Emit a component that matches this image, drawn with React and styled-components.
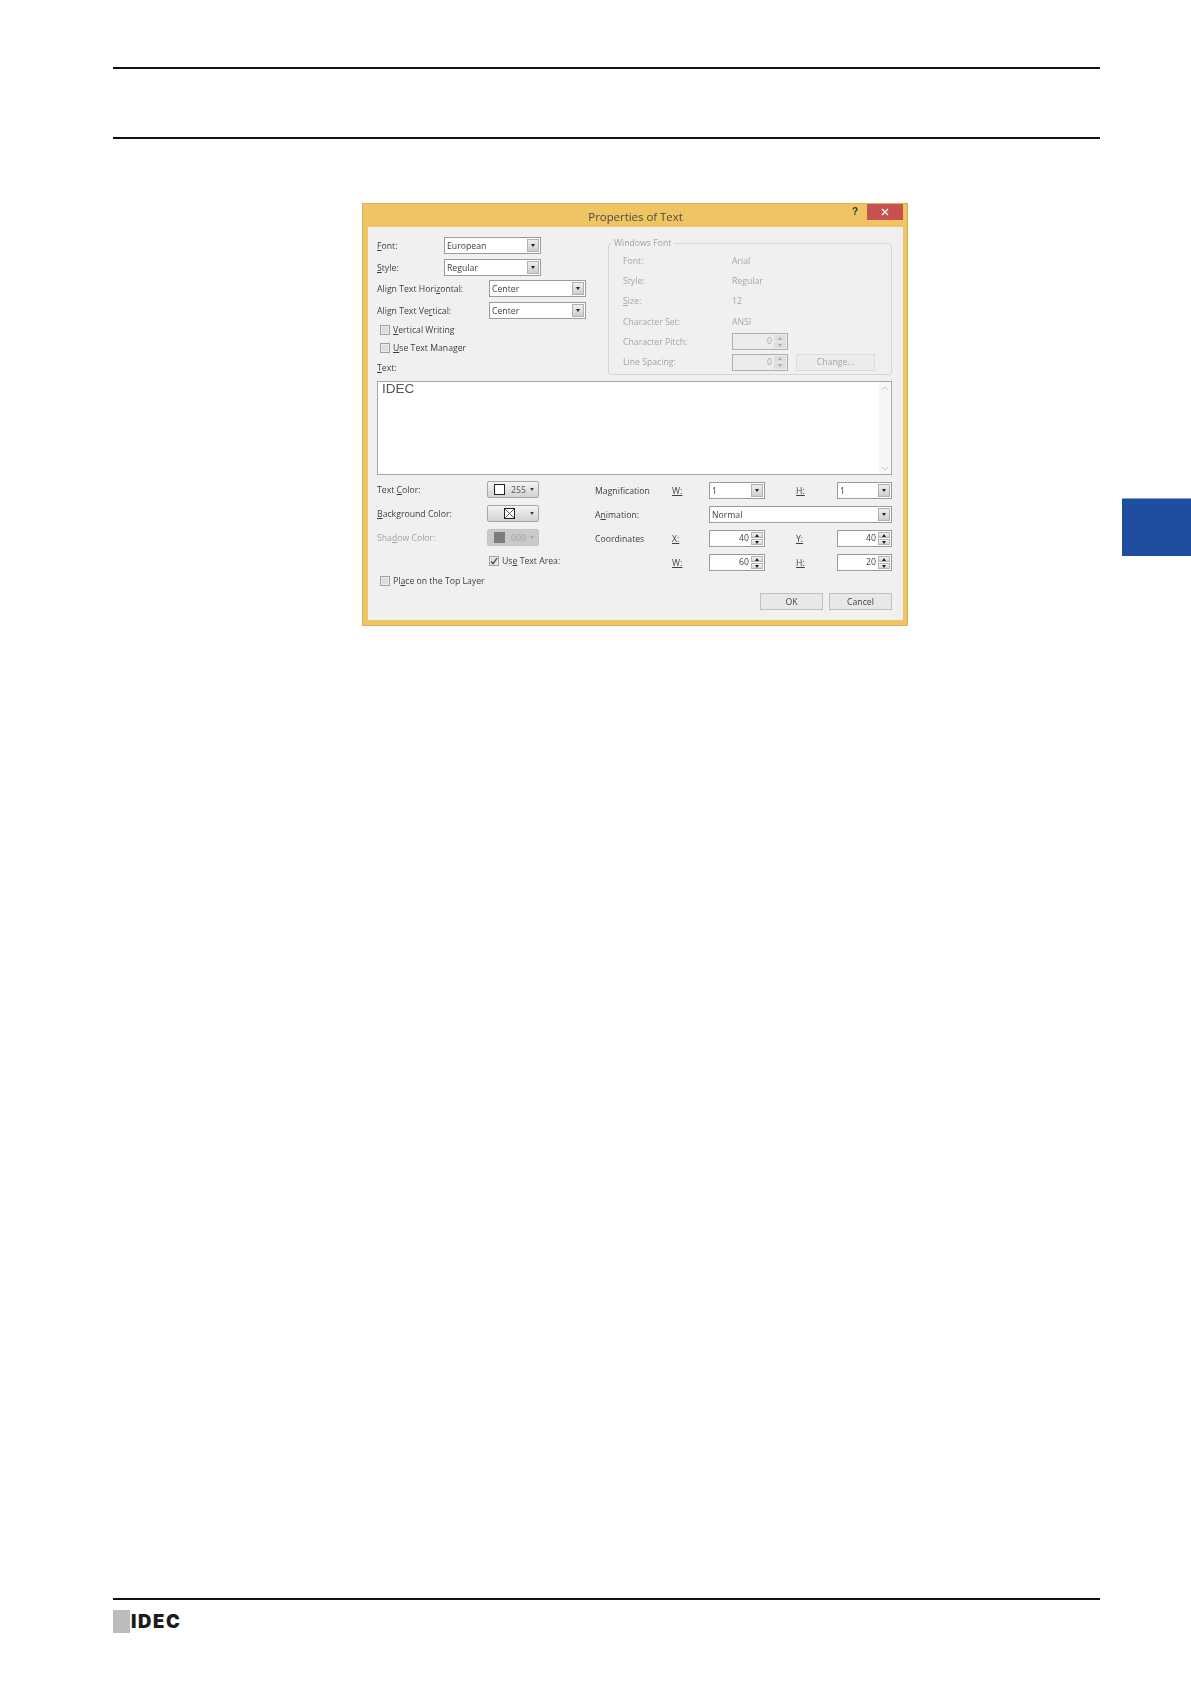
import React from "react";
import styled, { createGlobalStyle } from "styled-components";

const Global = createGlobalStyle`
  html, body { margin: 0; padding: 0; background: #fff; }
  body { font-family: "Open Sans", "Noto Sans", "Liberation Sans", sans-serif; }
  u { text-underline-offset: 1px; text-decoration-thickness: 1px; }
`;

const Page = styled.div`
  width: 1191px; height: 1684px; box-sizing: border-box;
  padding-top: 67px; display: flex; flex-direction: column; overflow: hidden;
`;
const Rule = styled.div`
  width: 987px; height: 2px; margin: ${p => p.$top || 0}px 0 0 113px; background: #111;
`;
const Middle = styled.div`
  display: flex; margin-top: 64px; padding-left: 362px; align-items: flex-start;
`;
const SideTab = styled.div`
  width: 69px; height: 58px; margin-left: auto; margin-top: 295px;
  background: #1f4ea1; border-top: 1px solid #7fa2d8; box-sizing: border-box;
`;
const Footer = styled.div`
  margin-top: auto; padding-bottom: 51px;
`;
const LogoWrap = styled.div`
  display: flex; align-items: center; height: 23px; margin: 10px 0 0 113px;
`;
const LogoBlock = styled.div`
  width: 17px; height: 23px; background: #bcbcbc;
`;
const LogoText = styled.span`
  font: 900 18.5px/23px Inter, "Liberation Sans", sans-serif; color: #1c1c1c; letter-spacing: 1.6px;
  padding-left: 1px;
`;

const Dialog = styled.div`
  width: 546px; height: 423px; box-sizing: border-box; flex: none;
  background: #efc463; border: 1px solid #d8b05a; padding: 0 4px 5px 5px;
  display: flex; flex-direction: column; filter: blur(0.35px);
  font-size: 8.7px; color: #3e3e3e; line-height: 12px;
`;
const TitleBar = styled.div`
  height: 23px; flex: none; display: grid; grid-template-columns: 1fr auto 1fr; align-items: center;
`;
const Title = styled.div`
  font-size: 11.4px; line-height: 23px; color: #4c4a44; padding-top: 1px;
`;
const Controls = styled.div`
  display: flex; align-self: start; justify-content: flex-end; align-items: flex-start;
`;
const Help = styled.span`
  font: 700 10px/16px "Liberation Sans", sans-serif; color: #333; margin-right: 9px;
`;
const Close = styled.div`
  width: 36px; height: 16px; background: #c75050; color: #fff;
  display: flex; align-items: center; justify-content: center;
`;
const Client = styled.div`
  flex: 1; background: #f0f0f0; padding: 10px 11px 10px 9px; display: flex; flex-direction: column; min-height: 0;
`;
const TopSection = styled.div`display: flex; flex: none; height: 138px;`;
const LeftCol = styled.div`width: 231px; flex: none; display: flex; flex-direction: column;`;
const FieldRow = styled.div`
  display: flex; align-items: center; height: ${p => p.$h || 17}px; margin-top: ${p => p.$mt || 0}px;
  padding-left: ${p => p.$indent || 0}px;
`;
const FieldLabel = styled.span`
  width: ${p => p.$w}px; flex: none; white-space: nowrap; color: ${p => p.$off ? "#a4a4a4" : "inherit"};
`;
const ComboBox = styled.div`
  width: ${p => p.$w ? p.$w + "px" : "auto"}; height: 17px; box-sizing: border-box; background: #fff;
  border: 1px solid #9b9b9b; display: flex; align-items: center; justify-content: space-between;
  padding: 1px 1px 1px 2px;
`;
const ArrowBtn = styled.div`
  width: 12px; align-self: stretch; background: linear-gradient(#eeeeee, #cdcdcd);
  border: 1px solid #b0b0b0; box-sizing: border-box; display: flex; align-items: center; justify-content: center;
`;
const Tri = styled.span`
  width: 0; height: 0; border-left: 2.5px solid transparent; border-right: 2.5px solid transparent;
  border-${p => p.$up ? "bottom" : "top"}: 3px solid ${p => p.$c || "#222"};
`;
const CheckBox = styled.div`
  width: 10px; height: 10px; box-sizing: border-box; flex: none; margin-right: 3px;
  border: 1px solid #a0a0a0; background: #dcdcdc; box-shadow: inset 0 0 0 1px #ececec;
  display: flex; align-items: center; justify-content: center;
`;
const Group = styled.div`
  width: 284px; height: 132px; margin-top: 6px; box-sizing: border-box; position: relative; flex: none;
  border: 1px solid #d6d6d6; border-radius: 3px; padding: 7px 14px 0; color: #a6a6a6;
`;
const Legend = styled.span`
  position: absolute; left: 3px; top: -7px; padding: 0 3px 0 2px; background: #f0f0f0; color: #a0a0a0;
`;
const GroupGrid = styled.div`
  display: grid; grid-template-columns: 109px 1fr; grid-auto-rows: 20.2px; align-items: center;
`;
const ValueCell = styled.div`display: flex; align-items: center;`;
const SpinBox = styled.div`
  width: ${p => p.$w}px; height: 17px; box-sizing: border-box; flex: none;
  background: ${p => p.$off ? "#ececec" : "#fff"}; border: 1px solid ${p => p.$off ? "#aeaeae" : "#9b9b9b"};
  display: flex; align-items: stretch; justify-content: flex-end; padding: 1px;
`;
const SpinValue = styled.span`
  line-height: 13px; margin-right: 2px; color: ${p => p.$off ? "#a8a8a8" : "inherit"};
`;
const SpinBtns = styled.div`
  width: 12px; display: flex; flex-direction: column; gap: 1px; flex: none;
`;
const SpinPart = styled.div`
  flex: 1; display: flex; align-items: center; justify-content: center;
  background: ${p => p.$off ? "#dedede" : "linear-gradient(#f2f2f2, #d8d8d8)"};
  border: ${p => p.$off ? "none" : "1px solid #b4b4b4"}; box-sizing: border-box;
`;
const ChangeBtn = styled.div`
  width: 79px; height: 17px; margin-left: 8px; box-sizing: border-box; background: #ececec;
  border: 1px solid #dcdcdc; color: #a4a4a4; display: flex; align-items: center; justify-content: center;
`;
const TextArea = styled.div`
  height: 94px; flex: none; margin-top: 6px; box-sizing: border-box; background: #fff;
  border: 1px solid #a8a8a8; display: flex; justify-content: space-between;
`;
const TextValue = styled.span`
  font: 13.5px/14px "Liberation Sans", sans-serif; color: #555; padding-left: 4px;
`;
const ScrollBar = styled.div`
  width: 12px; display: flex; flex-direction: column; justify-content: space-between; align-items: center;
  padding: 4px 0 3px; background: #f6f6f6;
`;
const BottomSection = styled.div`display: flex; margin-top: 6px; flex: none;`;
const BottomLeft = styled.div`width: 218px; flex: none; display: flex; flex-direction: column;`;
const ColorBtn = styled.div`
  width: 52px; height: 17px; box-sizing: border-box; flex: none; border-radius: 2px;
  border: 1px solid ${p => p.$off ? "#c4c4c4" : "#a6a6a6"};
  background: ${p => p.$off ? "#c9c9c9" : "linear-gradient(#f4f4f4, #d2d2d2)"};
  display: flex; align-items: center; padding: 0 4px 0 6px; justify-content: space-between;
  color: ${p => p.$off ? "#a2a2a2" : "#555"};
`;
const Swatch = styled.span`
  width: 11px; height: 11px; box-sizing: border-box; flex: none; margin-right: 6px;
  background: ${p => p.$off ? "#7c7c7c" : "#fff"}; border: ${p => p.$off ? "none" : "1px solid #222"};
`;
const ColorVal = styled.span`flex: 1;`;
const BottomRight = styled.div`
  display: grid; grid-template-columns: 77px 37px 56px 31px 41px 55px; grid-auto-rows: 17px; row-gap: 7px;
  margin-top: 1px; align-items: center; align-self: flex-start;
`;
const GridCombo = styled(ComboBox)`
  grid-column: ${p => p.$span || "auto"};
`;
const Actions = styled.div`
  margin-top: auto; display: flex; justify-content: flex-end; gap: 6px;
`;
const PushBtn = styled.div`
  width: 63px; height: 17px; box-sizing: border-box; background: #e8e8e8; border: 1px solid #c0c0c0;
  display: flex; align-items: center; justify-content: center;
`;

const Combo = ({ w, children, span }) => (
  <GridCombo $w={w} $span={span}>
    <span>{children}</span>
    <ArrowBtn><Tri /></ArrowBtn>
  </GridCombo>
);
const Spin = ({ w, value, off }) => (
  <SpinBox $w={w} $off={off}>
    <SpinValue $off={off}>{value}</SpinValue>
    <SpinBtns>
      <SpinPart $off={off}><Tri $up $c={off ? "#aaa" : "#222"} /></SpinPart>
      <SpinPart $off={off}><Tri $c={off ? "#aaa" : "#222"} /></SpinPart>
    </SpinBtns>
  </SpinBox>
);
const Check = ({ checked }) => (
  <CheckBox>
    {checked && (
      <svg width="8" height="8" viewBox="0 0 8 8"><path d="M1 4.5 L3 6.8 L7 1" fill="none" stroke="#444" strokeWidth="1.3" /></svg>
    )}
  </CheckBox>
);

export default function App() {
  return (
    <Page>
      <Global />
      <Rule />
      <Rule $top={68} />
      <Middle>
        <Dialog>
          <TitleBar>
            <span />
            <Title>Properties of Text</Title>
            <Controls>
              <Help>?</Help>
              <Close>
                <svg width="8" height="8" viewBox="0 0 8 8"><path d="M1 1 L7 7 M7 1 L1 7" stroke="#fff" strokeWidth="1.3" /></svg>
              </Close>
            </Controls>
          </TitleBar>
          <Client>
            <TopSection>
              <LeftCol>
                <FieldRow><FieldLabel $w={67}><u>F</u>ont:</FieldLabel><Combo w={97}>European</Combo></FieldRow>
                <FieldRow $mt={5}><FieldLabel $w={67}><u>S</u>tyle:</FieldLabel><Combo w={97}>Regular</Combo></FieldRow>
                <FieldRow $mt={4}><FieldLabel $w={112}>Align Text Hori<u>z</u>ontal:</FieldLabel><Combo w={97}>Center</Combo></FieldRow>
                <FieldRow $mt={5}><FieldLabel $w={112}>Align Text Ve<u>r</u>tical:</FieldLabel><Combo w={97}>Center</Combo></FieldRow>
                <FieldRow $h={10} $mt={6} $indent={3}><Check /><span><u>V</u>ertical Writing</span></FieldRow>
                <FieldRow $h={10} $mt={8} $indent={3}><Check /><span><u>U</u>se Text Manager</span></FieldRow>
                <FieldRow $h={12} $mt={9}><span><u>T</u>ext:</span></FieldRow>
              </LeftCol>
              <Group>
                <Legend>Windows Font</Legend>
                <GroupGrid>
                  <span>Font:</span><span>Arial</span>
                  <span>Style:</span><span>Regular</span>
                  <span><u>S</u>ize:</span><span>12</span>
                  <span>Character Set:</span><span>ANSI</span>
                  <span>Character Pitch:</span><ValueCell><Spin w={56} value="0" off /></ValueCell>
                  <span>Line Spacing:</span>
                  <ValueCell><Spin w={56} value="0" off /><ChangeBtn>Chan<u>g</u>e...</ChangeBtn></ValueCell>
                </GroupGrid>
              </Group>
            </TopSection>
            <TextArea>
              <TextValue>IDEC</TextValue>
              <ScrollBar>
                <svg width="8" height="5" viewBox="0 0 8 5"><path d="M1 4 L4 1 L7 4" fill="none" stroke="#c4c4c4" /></svg>
                <svg width="8" height="5" viewBox="0 0 8 5"><path d="M1 1 L4 4 L7 1" fill="none" stroke="#c4c4c4" /></svg>
              </ScrollBar>
            </TextArea>
            <BottomSection>
              <BottomLeft>
                <FieldRow>
                  <FieldLabel $w={110}>Text <u>C</u>olor:</FieldLabel>
                  <ColorBtn><Swatch /><ColorVal>255</ColorVal><Tri $c="#444" /></ColorBtn>
                </FieldRow>
                <FieldRow $mt={7}>
                  <FieldLabel $w={110}><u>B</u>ackground Color:</FieldLabel>
                  <ColorBtn>
                    <svg width="11" height="11" viewBox="0 0 11 11" style={{ marginLeft: 10 }}><rect x="0.5" y="0.5" width="10" height="10" fill="#fff" stroke="#222" /><path d="M1 1 L10 10 M10 1 L1 10" stroke="#333" strokeWidth="0.8" /></svg>
                    <Tri $c="#444" />
                  </ColorBtn>
                </FieldRow>
                <FieldRow $mt={7}>
                  <FieldLabel $w={110} $off>Sha<u>d</u>ow Color:</FieldLabel>
                  <ColorBtn $off><Swatch $off /><ColorVal>000</ColorVal><Tri $c="#a8a8a8" /></ColorBtn>
                </FieldRow>
                <FieldRow $h={10} $mt={10} $indent={112}><Check checked /><span>Us<u>e</u> Text Area:</span></FieldRow>
                <FieldRow $h={10} $mt={10} $indent={3}><Check /><span>Pl<u>a</u>ce on the Top Layer</span></FieldRow>
              </BottomLeft>
              <BottomRight>
                <span>Magnification</span><u>W:</u><Combo>1</Combo><span /><u>H:</u><Combo>1</Combo>
                <span>A<u>n</u>imation:</span><span /><Combo span="3 / 7">Normal</Combo>
                <span>Coordinates</span><u>X:</u><Spin w={56} value="40" /><span /><u>Y:</u><Spin w={55} value="40" />
                <span /><u>W:</u><Spin w={56} value="60" /><span /><u>H:</u><Spin w={55} value="20" />
              </BottomRight>
            </BottomSection>
            <Actions>
              <PushBtn>OK</PushBtn>
              <PushBtn>Cancel</PushBtn>
            </Actions>
          </Client>
        </Dialog>
        <SideTab />
      </Middle>
      <Footer>
        <Rule />
        <LogoWrap>
          <LogoBlock />
          <LogoText>IDEC</LogoText>
        </LogoWrap>
      </Footer>
    </Page>
  );
}
